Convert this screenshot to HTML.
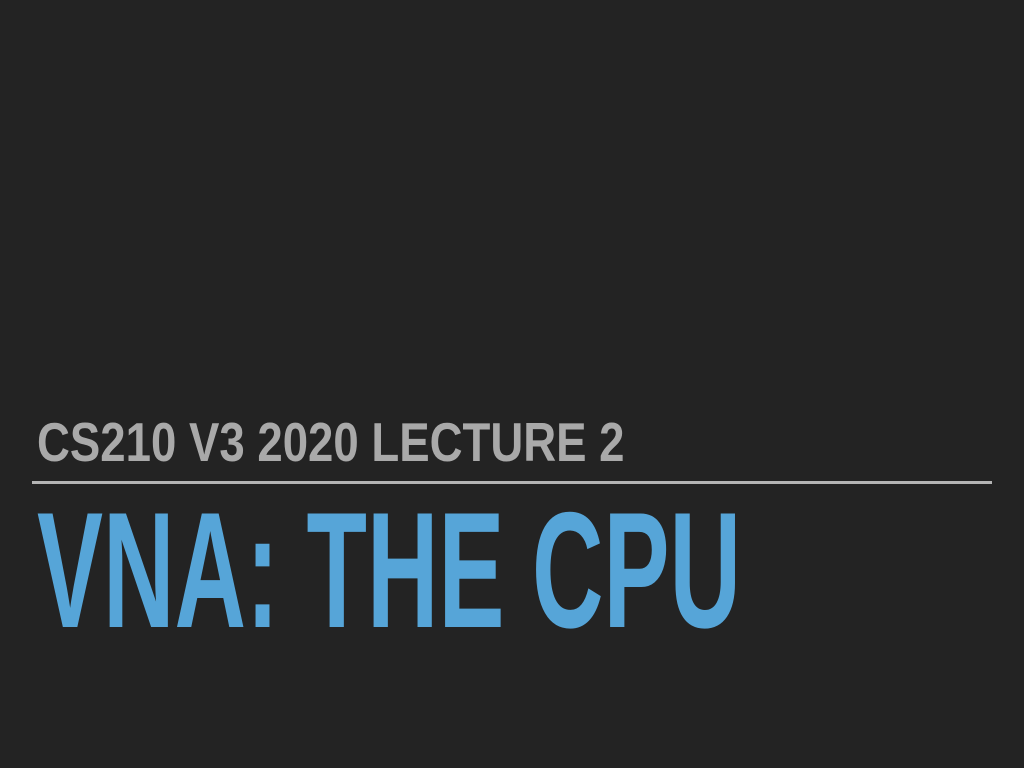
<!DOCTYPE html>
<html><head><style>
html,body{margin:0;padding:0;}
body{width:1024px;height:768px;background:#232323;position:relative;overflow:hidden;font-family:"Liberation Sans",sans-serif;font-weight:bold;}
.t{position:absolute;white-space:nowrap;line-height:1;transform-origin:0 0;}
#sub{left:37px;top:416px;font-size:54.5px;color:#a9a9a9;transform:scaleX(0.836);}
#title{left:37px;top:488px;font-size:165px;color:#56a5d8;transform:scaleX(0.6);}
#rule{position:absolute;left:32px;top:481px;width:960px;height:3px;background:#b4b4b4;}
</style></head><body>
<div class="t" id="sub">CS210 V3 2020 LECTURE 2</div>
<div id="rule"></div>
<div class="t" id="title">VNA: THE CPU</div>
</body></html>
